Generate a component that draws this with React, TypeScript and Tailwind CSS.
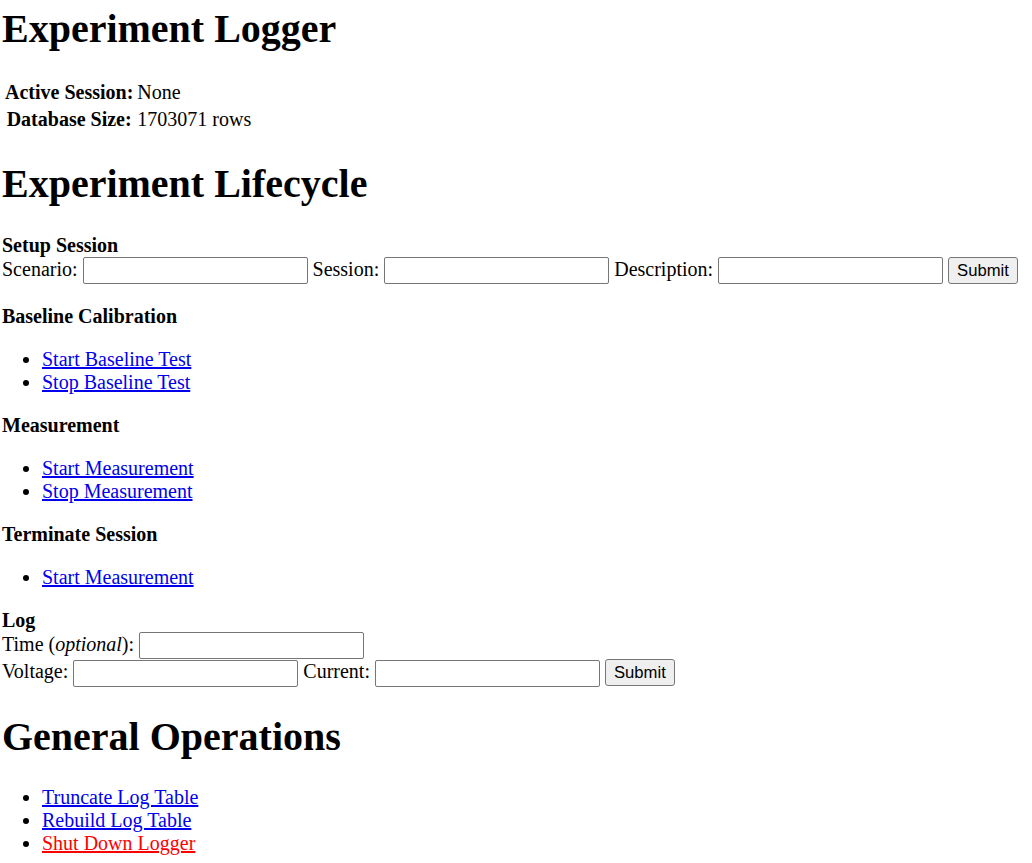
import React from "react";

const serif = "font-['Liberation_Serif','Times_New_Roman',serif]";
const field =
  "inline-block align-baseline w-[225px] h-[27px] px-[2.5px] bg-white border border-[#767676] rounded-[2px] font-['Liberation_Sans',Arial,sans-serif] text-[16.67px]";
const submit =
  "inline-block align-baseline h-[27px] px-[8px] bg-[#efefef] border border-[#767676] rounded-[3px] text-black font-['Liberation_Sans',Arial,sans-serif] text-[16.67px] leading-[19px]";
const link = "text-[#0000ee] underline";

function LinkList({ items }: { items: { label: string; danger?: boolean }[] }) {
  return (
    <ul className="list-disc pl-[40px] my-[20px]">
      {items.map((item) => (
        <li key={item.label}>
          <a href="#" className={item.danger ? "text-[#ff0000] underline" : link}>
            {item.label}
          </a>
        </li>
      ))}
    </ul>
  );
}

function App() {
  return (
    <div className={`${serif} text-[20px] leading-[23px] text-black bg-white min-h-screen px-[2px] pt-[5.5px]`}>
      <h1 className="text-[40px] leading-[46px] font-bold mb-[26.8px]">Experiment Logger</h1>

      <table className="border-separate border-spacing-[2px]">
        <tbody>
          <tr>
            <th className="p-[1px] font-bold text-center">Active Session:</th>
            <td className="p-[1px]">None</td>
          </tr>
          <tr>
            <th className="p-[1px] font-bold text-center">Database Size:</th>
            <td className="p-[1px]">1703071 rows</td>
          </tr>
        </tbody>
      </table>

      <h1 className="text-[40px] leading-[46px] font-bold my-[26.8px]">Experiment Lifecycle</h1>

      <form className="pb-[1px]" onSubmit={(e) => e.preventDefault()}>
        <b>Setup Session</b>
        <br />
        Scenario: <input type="text" className={field} /> Session:{" "}
        <input type="text" className={field} /> Description:{" "}
        <input type="text" className={field} />{" "}
        <button type="submit" className={submit}>
          Submit
        </button>
      </form>

      <p className="mt-[20px] font-bold">Baseline Calibration</p>
      <LinkList items={[{ label: "Start Baseline Test" }, { label: "Stop Baseline Test" }]} />

      <p className="font-bold">Measurement</p>
      <LinkList items={[{ label: "Start Measurement" }, { label: "Stop Measurement" }]} />

      <p className="font-bold">Terminate Session</p>
      <LinkList items={[{ label: "Start Measurement" }]} />

      <form onSubmit={(e) => e.preventDefault()}>
        <b>Log</b>
        <br />
        Time (<i>optional</i>): <input type="text" className={field} />
        <br />
        Voltage: <input type="text" className={field} /> Current:{" "}
        <input type="text" className={field} />{" "}
        <button type="submit" className={submit}>
          Submit
        </button>
      </form>

      <h1 className="text-[40px] leading-[46px] font-bold my-[26.8px]">General Operations</h1>
      <LinkList
        items={[
          { label: "Truncate Log Table" },
          { label: "Rebuild Log Table" },
          { label: "Shut Down Logger", danger: true },
        ]}
      />
    </div>
  );
}

export default App;
